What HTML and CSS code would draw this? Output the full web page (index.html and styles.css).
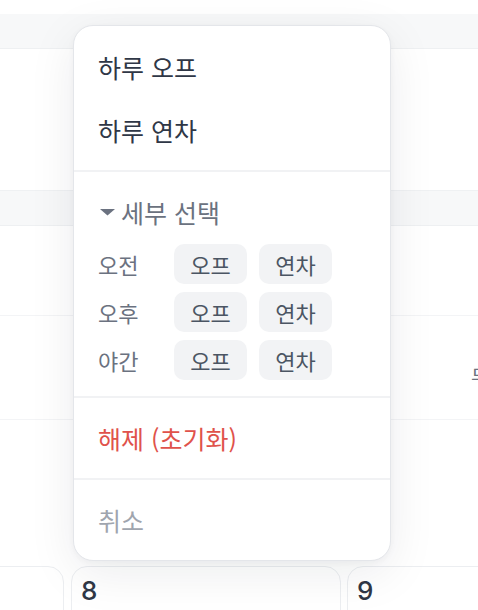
FILE: index.html
```html
<!DOCTYPE html>
<html lang="ko">
<head>
  <meta charset="UTF-8">
  <meta name="viewport" content="width=device-width, initial-scale=1.0">
  <title>근무 선택</title>
  <link rel="stylesheet" href="styles.css">
</head>
<body>
  <div class="board">
    <div class="top-gap"></div>
    <div class="band"></div>
    <div class="row row-tall"></div>
    <div class="band band-second"></div>
    <div class="row row-mid"></div>
    <div class="row row-low"><span class="cut-text">무</span></div>
    <div class="row row-empty"></div>

    <div class="days">
      <div class="day"></div>
      <div class="day"><span class="day-num">8</span></div>
      <div class="day"><span class="day-num">9</span></div>
    </div>
  </div>

  <div class="popover">
    <div class="section">
      <div class="item">하루 오프</div>
      <div class="item">하루 연차</div>
    </div>

    <div class="section detail">
      <div class="detail-title">
        <svg class="caret" width="15" height="8" viewBox="0 0 15 8"><polygon points="0,1 15,1 7.5,7.5" fill="#6b7280"/></svg>
        <span>세부 선택</span>
      </div>
      <div class="detail-rows">
        <div class="detail-row">
          <span class="label">오전</span>
          <button class="chip">오프</button>
          <button class="chip">연차</button>
        </div>
        <div class="detail-row">
          <span class="label">오후</span>
          <button class="chip">오프</button>
          <button class="chip">연차</button>
        </div>
        <div class="detail-row">
          <span class="label">야간</span>
          <button class="chip">오프</button>
          <button class="chip">연차</button>
        </div>
      </div>
    </div>

    <div class="section">
      <div class="item danger">해제 (초기화)</div>
    </div>

    <div class="section">
      <div class="item muted">취소</div>
    </div>
  </div>
</body>
</html>
```

FILE: styles.css
```css
/* Base */
body {
  margin: 0;
  background-color: #ffffff;
  font-family: "Noto Sans CJK KR", "Noto Sans", sans-serif;
  color: #2f3746;
  overflow: hidden;
}

/* Calendar behind the menu */
.board {
  width: 478px;
  height: 610px;
  overflow: hidden;
}
.top-gap {
  height: 14px;
}
.band {
  height: 34px;
  background-color: #f7f8f9;
  border-bottom: 1px solid #eef0f2;
}
.band-second {
  border-top: 1px solid #eff1f3;
}
.row {
  background-color: #ffffff;
  border-bottom: 1px solid #f3f4f6;
}
.row-tall {
  height: 141px;
  border-bottom: none;
}
.row-mid {
  height: 89px;
}
.row-low {
  height: 104px;
  padding-left: 471px;
  box-sizing: border-box;
  white-space: nowrap;
}
.cut-text {
  display: block;
  padding-top: 48px;
  font-size: 20px;
  line-height: 26px;
  color: #6b7280;
}
.row-empty {
  height: 146px;
  border-bottom: none;
}
.days {
  display: flex;
  gap: 6px;
  margin-left: -206px;
}
.day {
  flex: 0 0 270px;
  height: 80px;
  border: 1px solid #eceef1;
  border-radius: 16px;
  padding: 9px 9px;
  box-sizing: border-box;
}
.day:first-child {
  margin-right: 1px;
}
.day-num {
  font-family: "Inter", "Noto Sans", sans-serif;
  font-size: 26px;
  line-height: 30px;
  font-weight: 500;
  color: #2f3746;
}

/* Popover menu */
.popover {
  position: absolute;
  left: 73px;
  top: 25px;
  width: 318px;
  box-sizing: border-box;
  background-color: #ffffff;
  border: 1px solid #e4e6ea;
  border-radius: 20px;
  box-shadow: 0 12px 48px rgba(17, 24, 39, 0.08), 0 2px 6px rgba(17, 24, 39, 0.04);
}
.section {
  padding: 9px 0;
  border-top: 2px solid #f1f2f4;
}
.section:first-child {
  border-top: none;
}
.section:nth-child(3),
.section:nth-child(4) {
  padding: 8px 0 9px;
}
.item {
  height: 63px;
  display: flex;
  align-items: center;
  padding-left: 24px;
  font-size: 25px;
  color: #2f3746;
}
.danger {
  color: #e0524b;
}
.muted {
  color: #a0a5ae;
}

/* Detail block */
.detail {
  padding: 24px 24px 16px;
}
.detail-title {
  display: flex;
  align-items: center;
  gap: 6px;
  height: 32px;
  font-size: 25px;
  color: #6b7280;
}
.caret {
  margin-left: 2px;
}
.detail-rows {
  display: flex;
  flex-direction: column;
  gap: 8px;
  margin-top: 16px;
}
.detail-row {
  display: flex;
  align-items: center;
  gap: 12px;
}
.label {
  width: 64px;
  font-size: 22px;
  color: #6b7280;
}
.chip {
  width: 73px;
  height: 40px;
  border: none;
  border-radius: 10px;
  background-color: #f2f3f5;
  font-family: inherit;
  font-size: 22px;
  color: #4b5563;
  padding: 0;
}
```
